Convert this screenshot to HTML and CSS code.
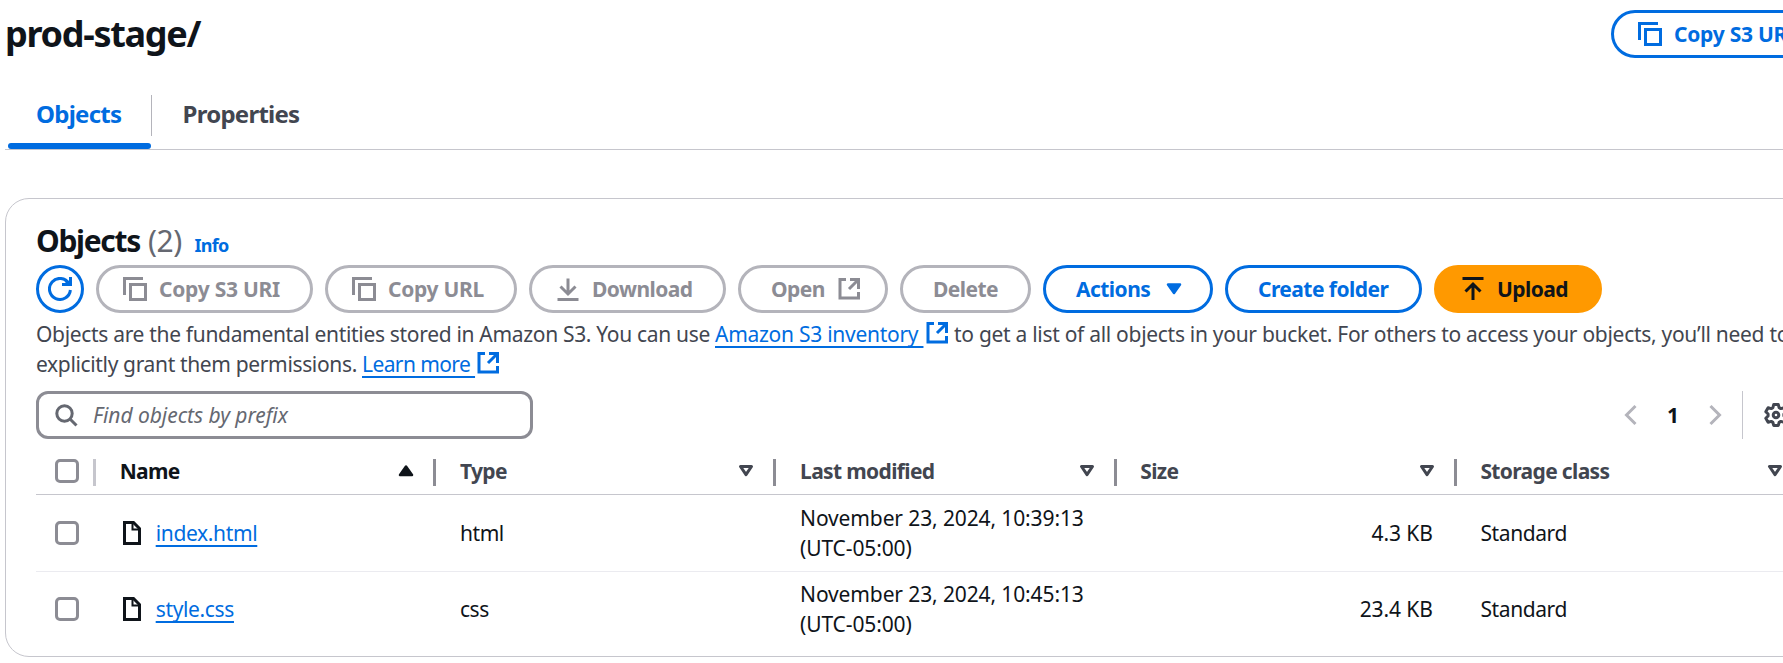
FILE: index.html
```html
<!DOCTYPE html>
<html lang="en">
<head>
<meta charset="utf-8">
<title>prod-stage/</title>
<link rel="stylesheet" href="styles.css">
</head>
<body>
<svg class="defs" width="0" height="0">
  <symbol id="copy" viewBox="0 0 24 24"><path d="M1.5 18V1.5H20M7.5 7.5h15v15h-15z"/></symbol>
  <symbol id="external" viewBox="0 0 24 24"><path d="M9 2.5H3V21h18.5v-6M13 2.5h8.5V12M21.5 2.5 12 12"/></symbol>
  <symbol id="file" viewBox="0 0 24 24"><path d="M4.5 1.5h9l6 6v15h-15z"/><path d="M12.5 1.5v7h7" stroke-width="2"/></symbol>
  <symbol id="sort" viewBox="0 0 24 24"><path d="M6.5 7.5h11L12 15.7z" stroke-width="3" stroke-linejoin="round"/></symbol>
</svg>
<main class="page">
  <header class="page-header">
    <h1 class="title">prod-stage/</h1>
    <button class="btn btn-normal btn-header"><svg class="icon"><use href="#copy"/></svg><span class="t-copy">Copy S3 URI</span></button>
  </header>
  <nav class="tabs">
    <a class="tab tab-active">Objects</a>
    <a class="tab">Properties</a>
  </nav>
  <section class="card">
    <div class="heading">
      <h2 class="heading-text">Objects</h2><span class="count">(2)</span><a class="info">Info</a>
    </div>
    <div class="actions">
      <button class="btn btn-normal btn-refresh"><svg class="icon" viewBox="0 0 24 24"><path d="M22.4 13A10.5 10.5 0 1 1 21 6.6"/><path d="M22.5 0v7.500H14M21.500 7.500 17.500 3.500"/></svg></button>
      <button class="btn btn-disabled w-copy"><svg class="icon"><use href="#copy"/></svg><span class="t-copy">Copy S3 URI</span></button>
      <button class="btn btn-disabled w-url"><svg class="icon"><use href="#copy"/></svg><span class="t-url">Copy URL</span></button>
      <button class="btn btn-disabled w-download"><svg class="icon" viewBox="0 0 24 24"><path d="M12 1.500V17M4.500 9.500 12 17l7.500-7.500M1.500 22.500h21"/></svg><span class="t-download">Download</span></button>
      <button class="btn btn-disabled btn-text w-open"><span class="t-open">Open</span><svg class="icon"><use href="#external"/></svg></button>
      <button class="btn btn-disabled btn-text w-delete"><span class="t-delete">Delete</span></button>
      <button class="btn btn-normal btn-text w-actions"><span class="t-actions">Actions</span><svg class="icon" viewBox="0 0 24 24"><path class="solid" d="M6 7.500h12L12 16z" stroke-width="2.500"/></svg></button>
      <button class="btn btn-normal btn-text w-create"><span class="t-create">Create folder</span></button>
      <button class="btn btn-primary w-upload"><svg class="icon" viewBox="0 0 24 24"><path d="M1.500 1.500h21M12 23V7.500M4.500 14.500 12 7l7.500 7.500"/></svg><span class="t-upload">Upload</span></button>
    </div>
    <p class="description">
      <span class="line"><span class="d1">Objects are the fundamental entities stored in Amazon S3. You can use</span><a class="link l1">Amazon S3 inventory&nbsp;</a><svg class="icon link-icon"><use href="#external"/></svg><span class="d2">to get a list of all objects in your bucket. For others to access your objects, you’ll need to</span></span>
      <span class="line"><span class="d3">explicitly grant them permissions.</span><a class="link l2">Learn more&nbsp;</a><svg class="icon link-icon"><use href="#external"/></svg></span>
    </p>
    <div class="tools">
      <div class="search">
        <svg class="icon" viewBox="0 0 24 24"><circle cx="10.500" cy="10.500" r="7.700"/><path d="m16 16 6.500 6.500"/></svg>
        <span class="placeholder">Find objects by prefix</span>
      </div>
      <div class="pagination">
        <svg class="icon chevron" viewBox="0 0 24 24"><path d="M16.500 3 7.500 12l9 9"/></svg>
        <span class="page-number">1</span>
        <svg class="icon chevron" viewBox="0 0 24 24"><path d="m7.500 3 9 9-9 9"/></svg>
      </div>
      <div class="preferences">
        <svg class="icon gear" viewBox="0 0 24 24"><path d="M9.700 1.500h4.600l.8 3.100 1.700 1 3.100-.9 2.300 4-2.300 2.300v2l2.300 2.300-2.300 4-3.100-.9-1.700 1-.8 3.100H9.700l-.8-3.100-1.700-1-3.100.9-2.300-4L4.100 13v-2L1.800 8.700l2.300-4 3.100.9 1.700-1z"/><circle cx="12" cy="12" r="2.800"/></svg>
      </div>
    </div>
    <div class="table">
      <div class="row head">
        <div class="cell select"><span class="checkbox"></span></div>
        <div class="cell sorted"><span class="t-name">Name</span><svg class="icon" viewBox="0 0 24 24"><path class="solid" d="M6 16h12l-6-8.500z" stroke-width="2.500"/></svg></div>
        <div class="cell"><span class="t-type">Type</span><svg class="icon"><use href="#sort"/></svg></div>
        <div class="cell"><span class="t-modified">Last modified</span><svg class="icon"><use href="#sort"/></svg></div>
        <div class="cell"><span class="t-size">Size</span><svg class="icon"><use href="#sort"/></svg></div>
        <div class="cell last"><span class="t-class">Storage class</span><svg class="icon"><use href="#sort"/></svg></div>
      </div>
      <div class="row">
        <div class="cell select"><span class="checkbox"></span></div>
        <div class="cell"><svg class="icon file"><use href="#file"/></svg><a class="link name">index.html</a></div>
        <div class="cell t-ext">html</div>
        <div class="cell"><span class="date">November 23, 2024, 10:39:13<br>(UTC-05:00)</span></div>
        <div class="cell number">4.3 KB</div>
        <div class="cell standard">Standard</div>
      </div>
      <div class="row row-last">
        <div class="cell select"><span class="checkbox"></span></div>
        <div class="cell"><svg class="icon file"><use href="#file"/></svg><a class="link name">style.css</a></div>
        <div class="cell t-ext">css</div>
        <div class="cell"><span class="date">November 23, 2024, 10:45:13<br>(UTC-05:00)</span></div>
        <div class="cell number">23.4 KB</div>
        <div class="cell standard">Standard</div>
      </div>
    </div>
  </section>
</main>
</body>
</html>
```
FILE: styles.css
```css
* { box-sizing: border-box; }
html, body { margin: 0; background: #fff; overflow: hidden; }
body {
  height: 663px;
  color: #0f141a;
  font: 21px/30px "Noto Sans", "Open Sans", sans-serif;
}
h1, h2, p { margin: 0; }
.defs { display: block; width: 0; height: 0; }
.page { width: 1880px; padding-left: 5px; }
.icon {
  flex: none;
  width: 24px;
  height: 24px;
  fill: none;
  stroke: currentColor;
  stroke-width: 3;
}
.solid { fill: currentColor; stroke-linejoin: round; }

.page-header { display: flex; align-items: flex-start; height: 95px; padding-top: 10px; }
.title { flex: none; width: 1606px; font-size: 36px; line-height: 48px; letter-spacing: -1.3px; }

.btn {
  display: flex;
  flex: none;
  align-items: center;
  gap: 12px;
  height: 48px;
  padding: 0 0 0 24px;
  border: 3px solid;
  border-radius: 24px;
  background: #fff;
  font: 700 21px/30px "Noto Sans", "Open Sans", sans-serif;
  white-space: nowrap;
}
.btn span { margin-top: -1px; }
.btn-text { padding-left: 30px; }
.btn-normal { color: #006ce0; border-color: #006ce0; }
.btn-disabled { color: #8c8c94; border-color: #b4b4bb; }
.btn-primary { color: #0f141a; background: #f90; border-color: #f90; }
.btn-header { width: 217px; }
.btn-refresh { width: 48px; padding-left: 9px; }
.w-copy { width: 217px; }
.w-url { width: 192px; }
.w-download { width: 197px; }
.w-open { width: 150px; }
.w-delete { width: 131px; }
.w-actions { width: 170px; }
.w-create { width: 197px; }
.w-upload { width: 168px; }
.t-copy { letter-spacing: -.25px; }
.t-url { letter-spacing: -.3px; }
.t-download, .t-create, .t-open, .t-delete, .t-actions, .t-upload { letter-spacing: -.55px; }

.tabs { display: flex; height: 55px; border-bottom: 1px solid #c6c6cd; padding-left: 3px; }
.tab {
  height: 54px;
  padding: 4px 32px 0 28px;
  color: #424650;
  font-size: 24px;
  font-weight: 700;
  letter-spacing: -.75px;
}
.tab-active {
  position: relative;
  width: 144px;
  padding-right: 0;
  color: #006ce0;
  background: linear-gradient(#b4b4bb, #b4b4bb) right top / 1px 41px no-repeat;
}
.tab-active::after {
  content: "";
  position: absolute;
  left: 0;
  bottom: 0;
  width: 143px;
  height: 6px;
  border-radius: 3px;
  background: #006ce0;
}
.tab:last-child { padding-left: 30.5px; }

.card {
  height: 459px;
  margin-top: 48px;
  padding: 22px 0 0 30px;
  border: 1px solid #c6c6cd;
  border-radius: 24px;
}
.heading { display: flex; align-items: baseline; height: 44px; line-height: 39px; }
.heading-text { width: 112px; font-size: 30px; letter-spacing: -1.3px; }
.count { width: 46.5px; color: #656871; font-size: 30px; letter-spacing: -.5px; }
.info { color: #006ce0; font-size: 18px; font-weight: 700; letter-spacing: -.7px; }
.actions { display: flex; gap: 12px; }

.description { padding-top: 6px; color: #424650; }
.line { display: flex; height: 30px; white-space: nowrap; }
.link {
  color: #006ce0;
  text-decoration: underline 2px;
  text-underline-offset: 4px;
  text-decoration-skip-ink: none;
}
.link-icon { margin-top: 2px; color: #006ce0; }
.d1 { width: 679px; letter-spacing: -.32px; }
.l1 { width: 210px; letter-spacing: -.27px; }
.d2 { margin-left: 5px; letter-spacing: -.29px; }
.d3 { width: 326px; letter-spacing: -.35px; }
.l2 { width: 114px; letter-spacing: -.6px; }

.tools { display: flex; height: 60px; padding-top: 12px; }
.search {
  display: flex;
  align-items: center;
  gap: 15px;
  width: 497px;
  height: 48px;
  padding-left: 15px;
  border: 3px solid #8c8c94;
  border-radius: 12px;
  color: #656871;
}
.placeholder { margin-top: -1px; font-style: italic; letter-spacing: -.05px; }
.pagination { display: flex; align-items: center; width: 1209px; height: 48px; padding-left: 1086px; }
.chevron { color: #b4b4bb; }
.page-number { width: 60px; margin-top: -1px; text-align: center; font-weight: 700; }
.preferences { display: flex; align-items: center; height: 48px; padding-left: 21px; border-left: 1px solid #c6c6cd; color: #424650; }
.gear { stroke-linejoin: round; }

.row {
  display: grid;
  grid-template-columns: 60px repeat(5, 340.2px);
  height: 77px;
  border-bottom: 1px solid #ebebf0;
}
.cell { display: flex; align-items: center; padding-left: 23.7px; }
.head { height: 56px; border-color: #c6c6cd; font-weight: 700; color: #424650; }
.head .cell {
  justify-content: space-between;
  padding: 0 18px 4px 23.7px;
  background: linear-gradient(#8c8c94, #8c8c94) right 20px / 3px 27px no-repeat;
}
.head .icon { margin-top: 13px; }
.head .cell span:not(.checkbox) { margin-top: 12px; }
.head .select { padding: 20px 0 0 19px; align-items: flex-start; background-image: linear-gradient(#c6c6cd, #c6c6cd); }
.head .last { padding-right: 9.5px; background: none; }
.head .sorted { color: #0f141a; }
.select { padding-left: 19px; }
.checkbox { width: 24px; height: 24px; border: 3px solid #8c8c94; border-radius: 5px; background: #fff; }
.row-last { height: 73px; border: 0; }
.file { margin-right: 12px; color: #0f141a; }
.name { letter-spacing: -.35px; }
.date { letter-spacing: -.12px; }
.number { justify-content: flex-end; padding-right: 24px; letter-spacing: -.1px; }
.standard, .t-ext { letter-spacing: -.4px; }
.t-name, .t-type, .t-size, .t-modified, .t-class { letter-spacing: -.65px; }
```
